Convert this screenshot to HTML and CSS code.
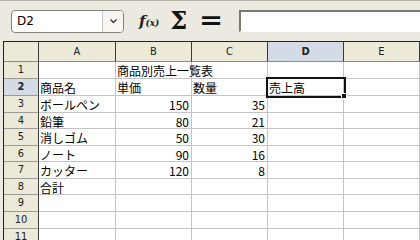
FILE: index.html
```html
<!DOCTYPE html>
<html lang="ja">
<head>
    <meta charset="UTF-8">
    <title>商品別売上一覧表</title>
    <link rel="stylesheet" href="styles.css">
</head>
<body>
    <!-- Formelleiste -->
    <div class="toolbar">
        <div class="namebox">
            <span class="namebox-text">D2</span>
            <span class="namebox-drop">
                <svg width="9" height="6" viewBox="0 0 9 6"><path d="M1.5 1.5 L4.5 4.5 L7.5 1.5" fill="none" stroke="#333" stroke-width="1.3"/></svg>
            </span>
        </div>
        <span class="btn-fx">f<span class="fx-x">(x)</span></span>
        <span class="btn-sum">&Sigma;</span>
        <span class="btn-eq">=</span>
        <div class="formula-input"></div>
    </div>

    <!-- Tabelle -->
    <div class="sheet">
        <div class="corner"></div>
        <div class="colhead">A</div>
        <div class="colhead">B</div>
        <div class="colhead">C</div>
        <div class="colhead active">D</div>
        <div class="colhead">E</div>

        <div class="rowhead">1</div>
        <div class="cell"></div><div class="cell over">商品別売上一覧表</div><div class="cell"></div><div class="cell"></div><div class="cell"></div>

        <div class="rowhead active">2</div>
        <div class="cell">商品名</div><div class="cell">単価</div><div class="cell">数量</div><div class="cell selected">売上高<span class="handle"></span></div><div class="cell"></div>

        <div class="rowhead">3</div>
        <div class="cell">ボールペン</div><div class="cell num">150</div><div class="cell num">35</div><div class="cell"></div><div class="cell"></div>

        <div class="rowhead">4</div>
        <div class="cell">鉛筆</div><div class="cell num">80</div><div class="cell num">21</div><div class="cell"></div><div class="cell"></div>

        <div class="rowhead">5</div>
        <div class="cell">消しゴム</div><div class="cell num">50</div><div class="cell num">30</div><div class="cell"></div><div class="cell"></div>

        <div class="rowhead">6</div>
        <div class="cell">ノート</div><div class="cell num">90</div><div class="cell num">16</div><div class="cell"></div><div class="cell"></div>

        <div class="rowhead">7</div>
        <div class="cell">カッター</div><div class="cell num">120</div><div class="cell num">8</div><div class="cell"></div><div class="cell"></div>

        <div class="rowhead">8</div>
        <div class="cell">合計</div><div class="cell"></div><div class="cell"></div><div class="cell"></div><div class="cell"></div>

        <div class="rowhead">9</div>
        <div class="cell"></div><div class="cell"></div><div class="cell"></div><div class="cell"></div><div class="cell"></div>

        <div class="rowhead">10</div>
        <div class="cell"></div><div class="cell"></div><div class="cell"></div><div class="cell"></div><div class="cell"></div>

        <div class="rowhead">11</div>
        <div class="cell"></div><div class="cell"></div><div class="cell"></div><div class="cell"></div><div class="cell"></div>
    </div>
</body>
</html>
```

FILE: styles.css
```css
/* Grundlayout */
* {
    margin: 0;
    padding: 0;
    box-sizing: border-box;
}

body {
    width: 420px;
    height: 240px;
    overflow: hidden;
    background-color: #ece9e1;
    font-family: "Noto Sans CJK JP", "DejaVu Sans", sans-serif;
}

/* Formelleiste */
.toolbar {
    display: flex;
    align-items: center;
    height: 41px;
    padding-left: 11px;
    border-top: 1px solid #b5b2a8;
}

.namebox {
    display: flex;
    width: 113px;
    height: 23px;
    background-color: #fff;
    border: 1px solid #85827a;
    border-radius: 4px;
}

.namebox-text {
    flex: 1;
    padding-left: 5px;
    font-family: "DejaVu Sans", sans-serif;
    font-size: 12px;
    line-height: 21px;
}

.namebox-drop {
    display: flex;
    align-items: center;
    justify-content: center;
    width: 21px;
    border-left: 1px solid #c8c5bc;
    background-color: #f7f6f2;
    border-radius: 0 3px 3px 0;
}

.btn-fx {
    margin-left: 15px;
    font-family: "DejaVu Serif", serif;
    font-style: italic;
    font-weight: bold;
    font-size: 15px;
    color: #222;
}

.fx-x {
    font-size: 9px;
}

.btn-sum {
    margin-left: 11px;
    font-family: "DejaVu Serif", serif;
    font-weight: bold;
    font-size: 24px;
    line-height: 24px;
    color: #111;
}

.btn-eq {
    margin-left: 14px;
    font-family: "DejaVu Sans", sans-serif;
    font-weight: bold;
    font-size: 24px;
    color: #111;
    transform: scaleX(1.2);
}

.formula-input {
    flex: 1;
    height: 22px;
    margin-left: 18px;
    background-color: #fff;
    border-top: 2px solid #7a7870;
    border-left: 2px solid #7a7870;
    border-bottom: 1px solid #fff;
}

/* Tabellenraster */
.sheet {
    display: grid;
    grid-template-columns: 35px 77px 76px 76px 76px 76px;
    grid-template-rows: 20px 17px 17px 17px 16px 17px 16px 17px 16px 17px 17px 17px;
    margin-left: 3px;
    border-top: 1px solid #222;
    border-left: 1px solid #222;
    background-color: #fff;
}

.corner,
.colhead {
    background-color: #ece9d8;
    border-right: 1px solid #3a3a3a;
    border-bottom: 1px solid #8a8a86;
}

.colhead {
    text-align: center;
    font-family: "DejaVu Sans Condensed", "DejaVu Sans", sans-serif;
    font-size: 11px;
    line-height: 19px;
    color: #222;
}

.rowhead {
    background-color: #ece9d8;
    border-right: 1px solid #3a3a3a;
    border-bottom: 1px solid #9a9a96;
    text-align: center;
    font-family: "DejaVu Sans Condensed", "DejaVu Sans", sans-serif;
    font-size: 11px;
    line-height: 16px;
    color: #222;
}

.colhead.active,
.rowhead.active {
    background-color: #d3dce4;
    font-weight: bold;
}

.cell {
    position: relative;
    border-right: 1px solid #c4c4c4;
    border-bottom: 1px solid #c4c4c4;
    padding: 0 2px 0 1px;
    font-size: 12px;
    line-height: 17px;
    color: #000;
    white-space: nowrap;
}

.cell.over {
    overflow: visible;
    z-index: 1;
}

.cell.num {
    text-align: right;
}

.cell.selected {
    outline: 2px solid #111;
    outline-offset: 0;
    z-index: 2;
}

/* Ausfüllkästchen */
.handle {
    position: absolute;
    right: -4px;
    bottom: -4px;
    width: 6px;
    height: 6px;
    background-color: #111;
    border: 1px solid #fff;
}
```
